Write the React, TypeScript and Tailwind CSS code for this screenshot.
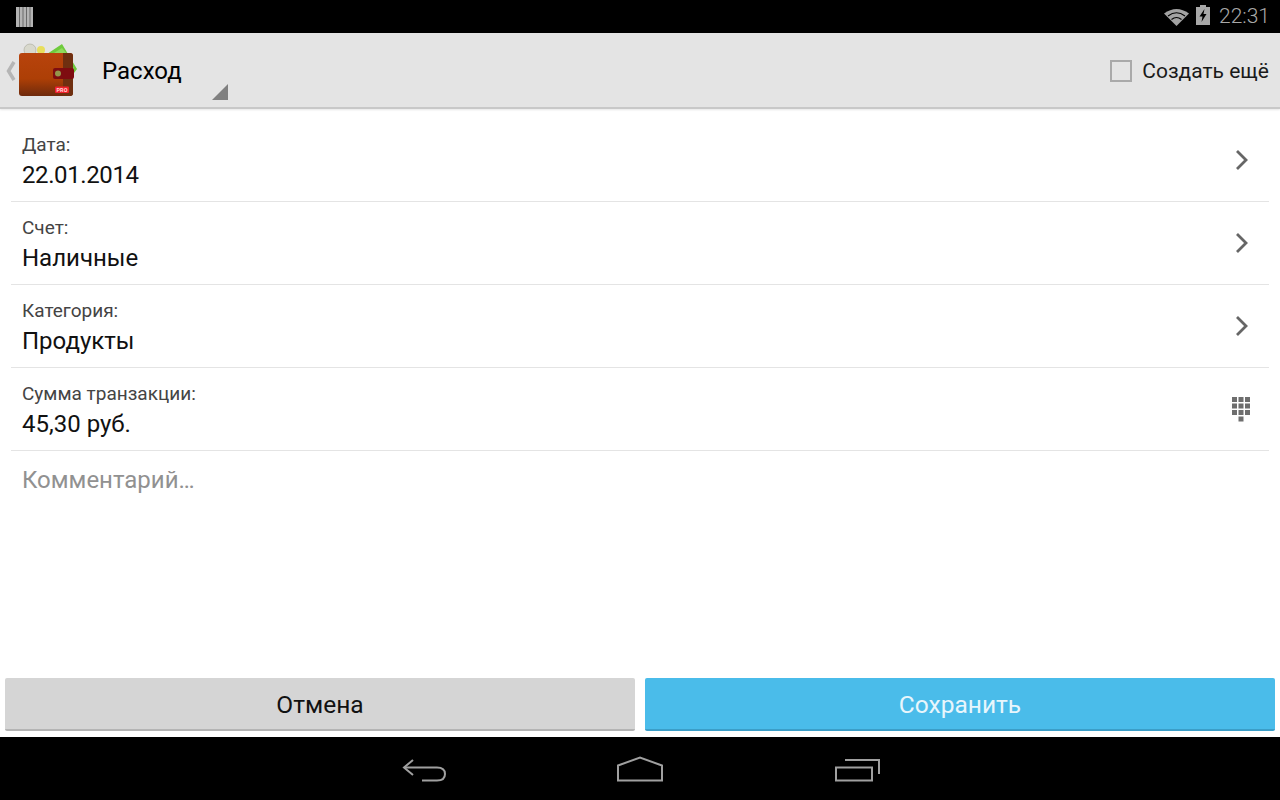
const rows = [
  { label: 'Дата:', value: '22.01.2014', icon: 'chevron', valueClass: 'tracking-[-0.4px]' },
  { label: 'Счет:', value: 'Наличные', icon: 'chevron', valueClass: '' },
  { label: 'Категория:', value: 'Продукты', icon: 'chevron', valueClass: '' },
  { label: 'Сумма транзакции:', value: '45,30 руб.', icon: 'keypad', valueClass: '' },
];

function WalletIcon() {
  return (
    <svg width="58" height="54" viewBox="0 0 58 54" className="shrink-0">
      <defs>
        <linearGradient id="wallet" x1="0" y1="0" x2="0" y2="1">
          <stop offset="0" stopColor="#b8430c" />
          <stop offset="0.6" stopColor="#ad3f06" />
          <stop offset="1" stopColor="#6e2a0c" />
        </linearGradient>
      </defs>
      <path d="M28 11 L43 1 L58 26 L55 30 L52 11 Z" fill="#6fcb3c" />
      <path d="M35 10 L43 5 L48 11 Z" fill="#8fdc5c" />
      <circle cx="11" cy="7" r="6" fill="#d8d8cc" stroke="#a8a898" strokeWidth="0.6" />
      <circle cx="22" cy="7" r="4" fill="#e8de5c" />
      <rect x="0" y="10" width="54" height="43" rx="3" fill="url(#wallet)" />
      <path d="M44 10 H51 Q54 10 54 13 V50 Q54 53 51 53 H44 Z" fill="#6f2f10" />
      <rect x="34" y="25" width="21" height="11" rx="2" fill="#7e0c10" />
      <circle cx="39" cy="30.5" r="3" fill="#94964a" />
      <rect x="36" y="43.5" width="14" height="6.5" rx="1" fill="#f0202c" />
      <text x="43" y="49" textAnchor="middle" fontSize="5.5" fontWeight="700" fill="#ffd8d8" fontFamily="Roboto, sans-serif">
        PRO
      </text>
    </svg>
  );
}

function Chevron() {
  return (
    <svg width="14" height="24" viewBox="0 0 14 24" fill="none" stroke="#666" strokeWidth="2.8" className="ml-[2px]">
      <path d="M2 3 L11 12 L2 21" />
    </svg>
  );
}

function Keypad() {
  return (
    <svg width="19" height="25" viewBox="0 0 19 25" fill="#6e6e6e" className="ml-[1px]">
      {[0, 1, 2].flatMap((r) =>
        [0, 1, 2].map((c) => (
          <rect key={`${r}-${c}`} x={c * 6.5} y={r * 6.5} width="5" height="5" />
        )),
      )}
      <rect x="6.5" y="19.5" width="5" height="5" />
    </svg>
  );
}

export default function App() {
  return (
    <div className="flex flex-col h-screen bg-white font-['Roboto',sans-serif] overflow-hidden">
      {/* Status bar */}
      <div className="h-[33px] bg-black flex items-center justify-between pl-4 pr-[10px] shrink-0">
        <svg width="17" height="20" viewBox="0 0 17 20">
          <rect width="17" height="20" fill="#b4b4b4" />
          <path d="M3.5 0V20M7 0V20M10.5 0V20M14 0V20" stroke="#6a6a6a" strokeWidth="1" />
        </svg>
        <div className="flex items-center">
          <svg width="25" height="18" viewBox="0 0 25 18" className="mr-[7px]">
            <path d="M0 5.5 Q12.5 -3.5 25 5.5 L12.5 18 Z" fill="#a2a2a2" />
            <path d="M4 8 Q12.5 1.5 21 8" stroke="#000" strokeWidth="1.1" fill="none" />
            <path d="M7.5 11.5 Q12.5 7.5 17.5 11.5" stroke="#000" strokeWidth="1.1" fill="none" />
          </svg>
          <svg width="14" height="20" viewBox="0 0 14 20" className="mr-[9px] mb-[3px]">
            <path d="M4 0H10V2H14V20H0V2H4Z" fill="#a8a8a8" />
            <path d="M8.5 4L3.5 11.5H6.5L5.5 17L10.5 9H7.5Z" fill="#000" />
          </svg>
          <span className="text-[21px] leading-none text-[#a8a8a8] font-light">22:31</span>
        </div>
      </div>

      {/* Action bar */}
      <div className="h-[76px] bg-[#e4e4e4] border-b-2 border-[#c8c8c8] shadow-[0_1px_2px_rgba(0,0,0,0.1)] flex items-center shrink-0 relative">
        <svg width="12" height="20" viewBox="0 0 12 20" className="ml-[5px] mr-[2px] mt-[1px] shrink-0">
          <path d="M9 1 L3.5 10 L9 19" stroke="#b5b5b5" strokeWidth="3.5" fill="none" />
        </svg>
        <WalletIcon />
        <span className="ml-[25px] mt-[1px] text-[24px] leading-none text-black">Расход</span>
        <div className="absolute left-[212px] bottom-[7px] w-0 h-0 border-l-[16px] border-l-transparent border-b-[16px] border-b-[#808080]" />
        <div className="ml-auto flex items-center pr-[11px]">
          <div className="w-[22px] h-[22px] mt-[1px] border-2 border-[#a9a9a9] mr-[10px]" />
          <span className="mt-[2px] text-[21px] leading-none text-[#1a1a1a]">Создать ещё</span>
        </div>
      </div>

      {/* Form */}
      <div className="flex-1 mx-[11px] pt-[10px]">
        {rows.map((row) => (
          <div key={row.label} className="h-[83px] border-b border-[#e4e4e4] flex items-center justify-between pl-[11px] pr-[16px]">
            <div className="flex flex-col pt-[5px]">
              <span className="text-[19px] leading-[22px] text-[#444]">{row.label}</span>
              <span className={`mt-[3px] text-[24px] leading-[32px] text-[#111] ${row.valueClass}`}>{row.value}</span>
            </div>
            <div className="w-6 flex justify-center">
              {row.icon === 'chevron' ? <Chevron /> : <Keypad />}
            </div>
          </div>
        ))}
        <div className="pl-[11px] pt-[13px] text-[24px] leading-[32px] text-[#919191]">Комментарий…</div>
      </div>

      {/* Buttons */}
      <div className="flex gap-[10px] px-[5px] h-[53px] mb-[6px] shrink-0">
        <button className="flex-1 rounded-[2px] pt-[3px] bg-[#d5d5d5] border-b-2 border-[#b4b4b4] text-[24.5px] text-[#111]">Отмена</button>
        <button className="flex-1 rounded-[2px] pt-[3px] bg-[#4abcea] border-b-2 border-[#3b9ec8] text-[24.5px] text-[#e8f6fc]">Сохранить</button>
      </div>

      {/* Navigation bar */}
      <div className="h-[63px] bg-black flex items-center justify-center pl-[2px] shrink-0 text-[#a0a0a0]">
        <svg width="46" height="26" viewBox="0 0 46 26" fill="none" stroke="currentColor" strokeWidth="2">
          <path d="M11 4 L2 11.5 L11 19" />
          <path d="M2 11.5 H35 Q43 11.5 43 18 Q43 24.5 35 24.5 H20" />
        </svg>
        <svg width="48" height="26" viewBox="0 0 48 26" fill="none" stroke="currentColor" strokeWidth="2" className="ml-[168px]">
          <path d="M2 9.5 L24 1.5 L46 9.5 V24.5 H2 Z" />
        </svg>
        <svg width="46" height="26" viewBox="0 0 46 26" fill="none" stroke="currentColor" strokeWidth="2" className="ml-[170px]">
          <rect x="2" y="11.5" width="36" height="13" />
          <path d="M11 4 H45 V18" />
        </svg>
      </div>
    </div>
  );
}
